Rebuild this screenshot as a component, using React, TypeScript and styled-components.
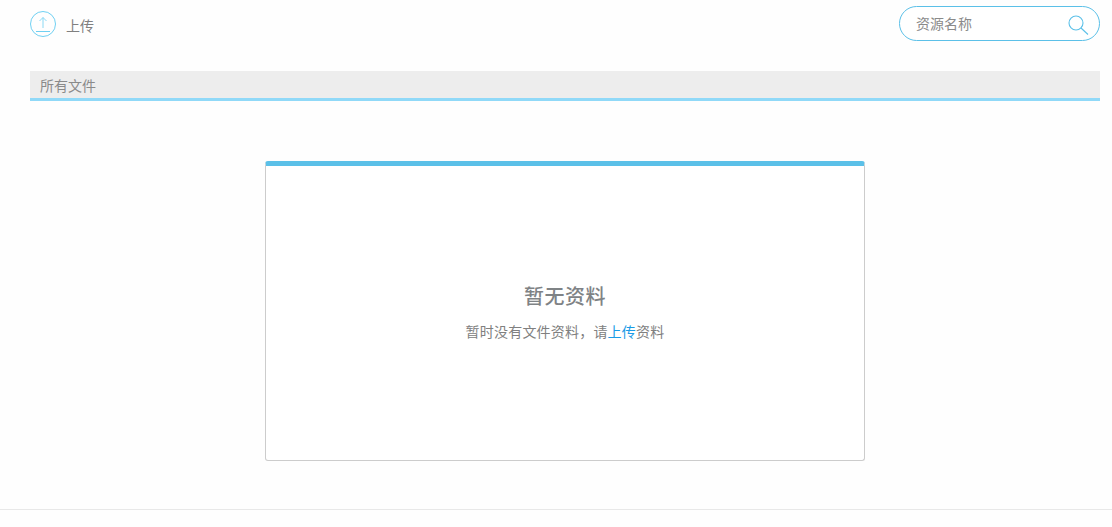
import React from 'react';
import styled, { createGlobalStyle } from 'styled-components';

const GlobalStyle = createGlobalStyle`
	html, body {
		margin: 0;
		padding: 0;
		background: #fefefe;
	}
	body {
		font-family: "Noto Sans CJK SC", "Liberation Sans", sans-serif;
	}
	* {
		box-sizing: border-box;
	}
`;

const UploadIcon = () => (
	<svg width='26' height='26' viewBox='0 0 26 26' fill='none' stroke='#6fd0f2' strokeWidth='1'>
		<circle cx='13' cy='13' r='12.5' />
		<path d='M13 17V6.500M9.500 10L13 6.500l3.500 3.500' strokeWidth='0.8' />
		<path d='M6 20.500h14' />
	</svg>
);

const SearchIcon = () => (
	<svg width='22' height='22' viewBox='0 0 22 22' fill='none' stroke='#5bc0e8' strokeWidth='1.1'>
		<circle cx='9' cy='9' r='7' />
		<path d='M14 14L21 20.500' />
	</svg>
);

const App = () => {
	return (
		<Page>
			<GlobalStyle />
			<Header>
				<UploadButton>
					<UploadIcon />
					<UploadLabel>上传</UploadLabel>
				</UploadButton>
				<SearchBox>
					<SearchInput placeholder='资源名称' />
					<SearchIcon />
				</SearchBox>
			</Header>
			<Breadcrumb>所有文件</Breadcrumb>
			<EmptyCard>
				<EmptyTitle>暂无资料</EmptyTitle>
				<EmptyText>
					暂时没有文件资料，请<UploadLink>上传</UploadLink>资料
				</EmptyText>
			</EmptyCard>
			<Footer />
		</Page>
	);
};

const Page = styled.div`
	width: 1112px;
	height: 527px;
	padding: 6px 12px 0 30px;
	overflow: hidden;
`;

const Header = styled.div`
	display: flex;
	justify-content: space-between;
	align-items: flex-start;
	height: 65px;
`;

const UploadButton = styled.div`
	display: flex;
	align-items: center;
	gap: 10px;
	margin-top: 5px;
	height: 26px;
`;

const UploadLabel = styled.span`
	font-size: 14px;
	line-height: 20px;
	margin-top: 1px;
	color: #808080;
`;

const SearchBox = styled.div`
	display: flex;
	align-items: center;
	width: 201px;
	height: 35px;
	padding: 0 10px 0 16px;
	border: 1px solid #5bc0e8;
	border-radius: 18px;
	background: #fff;
	svg {
		flex-shrink: 0;
		margin-top: 3px;
	}
`;

const SearchInput = styled.input`
	flex: 1;
	min-width: 0;
	height: 20px;
	margin-top: -2px;
	border: 0;
	outline: 0;
	padding: 0;
	background: transparent;
	font-family: inherit;
	font-size: 14px;
	color: #808080;
	&::placeholder {
		color: #8a8a8a;
		opacity: 1;
	}
`;

const Breadcrumb = styled.div`
	height: 30px;
	padding-left: 10px;
	background: #ededed;
	border-bottom: 3px solid #90d9f8;
	font-size: 14px;
	line-height: 29px;
	color: #8a8a8a;
`;

const EmptyCard = styled.div`
	display: flex;
	flex-direction: column;
	align-items: center;
	width: 600px;
	height: 300px;
	margin: 60px 0 0 235px;
	padding-top: 117px;
	background: #fff;
	border: 1px solid #ccc;
	border-top: 5px solid #5bc0e8;
	border-radius: 3px;
`;

const EmptyTitle = styled.div`
	font-size: 20px;
	line-height: 26px;
	font-weight: 500;
	letter-spacing: 0.5px;
	color: #7f8386;
`;

const EmptyText = styled.div`
	margin-top: 12px;
	font-size: 14px;
	line-height: 20px;
	letter-spacing: 0.2px;
	color: #808080;
`;

const UploadLink = styled.a`
	color: #1a9be6;
	cursor: pointer;
`;

const Footer = styled.div`
	height: 1px;
	margin: 48px -12px 0 -30px;
	background: #e8e8e8;
`;

export default App;
